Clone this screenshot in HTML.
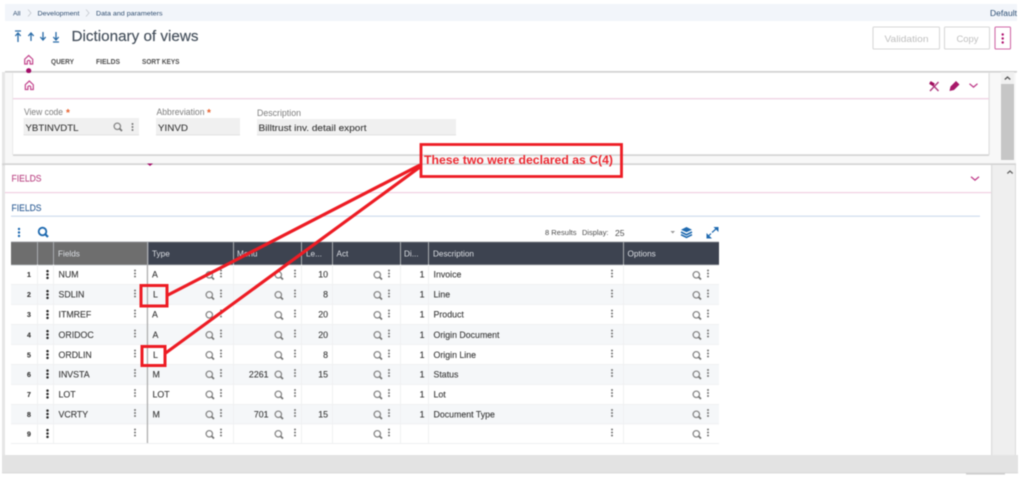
<!DOCTYPE html>
<html lang="en">
<head>
<meta charset="utf-8">
<title>Dictionary of views</title>
<style>
html,body{margin:0;padding:0;background:#fff;width:1024px;height:479px;overflow:hidden}
svg{display:block;filter:blur(.5px)}
text{font-family:"Liberation Sans",sans-serif}
.r text{font-size:8.8px;fill:#3a3a3a;stroke:#3a3a3a;stroke-width:.12px}
.n{font-weight:bold;font-size:7px!important;fill:#333!important}
.e{text-anchor:end}
.h{font-size:8.2px;fill:#dcdfe4}
</style>
</head>
<body>
<svg width="1024" height="479" viewBox="0 0 1024 479" xmlns="http://www.w3.org/2000/svg">
<defs>
<g id="s"><circle cx="-.7" cy="-.7" r="3.2" fill="none" stroke="#888" stroke-width="1.3"/><path d="M1.5 1.5L4 4" stroke="#777" stroke-width="1.8"/></g>
<g id="k"><circle cx="0" cy="-3" r="1" fill="#777"/><circle cx="0" cy="0" r="1" fill="#777"/><circle cx="0" cy="3" r="1" fill="#777"/></g>
<g id="kd"><circle cx="0" cy="-3.4" r="1.25" fill="#2c2c2c"/><circle cx="0" cy="0" r="1.25" fill="#2c2c2c"/><circle cx="0" cy="3.4" r="1.25" fill="#2c2c2c"/></g>
<g id="home" fill="none" stroke="#c4488f" stroke-width="1.2"><path d="M-4 -.8L0 -4.5L4 -.8V4H1.4V1.2Q0 -.4 -1.4 1.2V4H-4Z"/></g>
<g id="cv"><path d="M-4 -1.8L0 1.6L4 -1.8" fill="none" stroke="#c0408c" stroke-width="1.3"/></g>
<g id="ri">
<use href="#k" x="135" y="-1"/>
<use href="#s" x="210" y="1"/><use href="#k" x="221" y="-1"/>
<use href="#s" x="279" y="1"/><use href="#k" x="295" y="-1"/>
<use href="#s" x="378" y="1"/><use href="#k" x="389" y="-1"/>
<use href="#k" x="612" y="-1"/>
<use href="#s" x="697" y="1"/><use href="#k" x="708" y="-1"/>
<use href="#kd" x="47.5" y="0"/>
</g>
<g id="gr" fill="#f0f1f2">
<rect x="37" y="-10" width="1" height="20"/><rect x="53" y="-10" width="1" height="20"/><rect x="233" y="-10" width="1" height="20"/><rect x="301" y="-10" width="1" height="20"/><rect x="332" y="-10" width="1" height="20"/><rect x="400" y="-10" width="1" height="20"/><rect x="428" y="-10" width="1" height="20"/><rect x="623" y="-10" width="1" height="20"/>
</g>
</defs>

<rect width="1024" height="479" fill="#fff"/>
<!-- left strip and body -->
<rect x="2" y="72" width="1014" height="384" fill="#f8f8f8"/>
<rect x="2" y="72" width="3" height="384" fill="#e6e6e6"/>

<!-- breadcrumb -->
<rect x="5" y="4" width="1012" height="17" fill="#f2f5fa"/>
<text x="13" y="15.5" font-size="6.8" fill="#2f4d70">All</text>
<path d="M28 9.5L31 13L28 16.5M86 9.5L89 13L86 16.5" fill="none" stroke="#c8ccd2" stroke-width=".9"/>
<text x="37.5" y="15.5" font-size="6.8" fill="#2f4d70" textLength="42" lengthAdjust="spacingAndGlyphs">Development</text>
<text x="96" y="15.5" font-size="6.8" fill="#2f4d70" textLength="66.5" lengthAdjust="spacingAndGlyphs">Data and parameters</text>
<text x="990" y="16" font-size="8" fill="#2d4f74" textLength="27" lengthAdjust="spacingAndGlyphs">Default</text>

<!-- header -->
<rect x="5" y="21" width="1012" height="50" fill="#fff"/>
<g fill="none" stroke="#2a6ca8" stroke-width="1.3">
<path d="M15 31H21M18 42V33M15.3 36L18 33L20.7 36"/>
<path d="M31 41V33M28.3 36L31 33L33.7 36"/>
<path d="M43 32V40M40.3 37L43 40L45.7 37"/>
<path d="M56 32V40M53.3 37L56 40L58.7 37M53 42H59"/>
</g>
<text x="71.5" y="41" font-size="15" fill="#444f5b" stroke="#444f5b" stroke-width=".15" textLength="127" lengthAdjust="spacingAndGlyphs">Dictionary of views</text>
<rect x="873" y="27" width="66.5" height="22" rx="1" fill="#fff" stroke="#d8d8d8" stroke-width="1.1"/>
<text x="884.5" y="42" font-size="9.5" fill="#c0c0c0" textLength="44" lengthAdjust="spacingAndGlyphs">Validation</text>
<rect x="944.5" y="27" width="45" height="22" rx="1" fill="#fff" stroke="#d8d8d8" stroke-width="1.1"/>
<text x="956.5" y="42" font-size="9.5" fill="#c0c0c0" textLength="22" lengthAdjust="spacingAndGlyphs">Copy</text>
<rect x="995" y="27" width="15.5" height="22" rx="1" fill="#fff" stroke="#d06aa8" stroke-width="1.1"/>
<circle cx="1002.7" cy="34.5" r="1.2" fill="#b0106e"/><circle cx="1002.7" cy="38.5" r="1.2" fill="#b0106e"/><circle cx="1002.7" cy="42.5" r="1.2" fill="#b0106e"/>

<use href="#home" x="28.7" y="60"/>
<text x="51" y="64" font-size="7.4" font-weight="bold" fill="#505050" textLength="23" lengthAdjust="spacingAndGlyphs">QUERY</text>
<text x="96" y="64" font-size="7.4" font-weight="bold" fill="#505050" textLength="24" lengthAdjust="spacingAndGlyphs">FIELDS</text>
<text x="142" y="64" font-size="7.4" font-weight="bold" fill="#505050" textLength="37.5" lengthAdjust="spacingAndGlyphs">SORT KEYS</text>
<rect x="5" y="71" width="1012" height="1.6" fill="#d0d0d0"/>
<circle cx="28.7" cy="70.7" r="2.6" fill="#a30e69"/>

<!-- card 1 -->
<rect x="13" y="73" width="976" height="82" fill="#fff"/>
<rect x="13" y="154.3" width="976" height="1.6" fill="#d2d2d2"/>
<rect x="988.5" y="73" width="1.2" height="82" fill="#dedede"/>
<rect x="12.3" y="73" width=".8" height="82" fill="#e6e6e6"/>
<use href="#home" x="29.3" y="85.5"/>
<rect x="13" y="98" width="976" height="1.4" fill="#f0d5e5"/>
<path d="M930 82L938.5 91M938.5 82L930 91" fill="none" stroke="#b03a80" stroke-width="1.4"/>
<path d="M930 82.5L934 85" stroke="#a0105f" stroke-width="3.2"/>
<path d="M949.5 91L950.5 86.5L956 81L959.5 84.5L954 90Z" fill="#a8186a"/>
<use href="#cv" x="973.5" y="85.5"/>

<text x="24" y="115" font-size="8.8" fill="#7e7e7e" textLength="39" lengthAdjust="spacingAndGlyphs">View code</text>
<text x="66" y="116" font-size="10" font-weight="bold" fill="#e8602c">*</text>
<rect x="23.5" y="118" width="115.5" height="17" fill="#f0f0f0"/>
<rect x="23.5" y="134.5" width="115.5" height=".8" fill="#dcdcdc"/>
<text x="25.5" y="131" font-size="9.4" fill="#3c3c3c" stroke="#3c3c3c" stroke-width=".12" textLength="53" lengthAdjust="spacingAndGlyphs">YBTINVDTL</text>
<use href="#s" x="118" y="127"/><use href="#k" x="132.5" y="127"/>

<text x="156.5" y="115" font-size="8.8" fill="#7e7e7e" textLength="48" lengthAdjust="spacingAndGlyphs">Abbreviation</text>
<text x="207" y="116" font-size="10" font-weight="bold" fill="#e8602c">*</text>
<rect x="156" y="118" width="84" height="17" fill="#f0f0f0"/>
<rect x="156" y="134.5" width="84" height=".8" fill="#dcdcdc"/>
<text x="158" y="131" font-size="9.4" fill="#3c3c3c" stroke="#3c3c3c" stroke-width=".12" textLength="30" lengthAdjust="spacingAndGlyphs">YINVD</text>

<text x="257" y="116" font-size="8.8" fill="#7e7e7e" textLength="44" lengthAdjust="spacingAndGlyphs">Description</text>
<rect x="257" y="119" width="199" height="16" fill="#f0f0f0"/>
<rect x="257" y="134.5" width="199" height=".8" fill="#dcdcdc"/>
<text x="258.5" y="131" font-size="9.4" fill="#3c3c3c" stroke="#3c3c3c" stroke-width=".12" textLength="108" lengthAdjust="spacingAndGlyphs">Billtrust inv. detail export</text>

<!-- scrollbar 1 -->
<rect x="1001" y="72" width="13" height="88" fill="#f0f0f0"/>
<rect x="1001" y="84" width="13" height="76" fill="#c6c6c6"/>
<path d="M1004.8 79.5L1007.5 77L1010.2 79.5" fill="none" stroke="#555" stroke-width="1.3"/>

<!-- section 2 -->
<rect x="2" y="163.3" width="1014" height="2" fill="#d4d4d4"/>
<rect x="5" y="165" width="986" height="290" fill="#fff"/>
<path d="M147 163.5H153L150 166Z" fill="#a30e69"/>
<rect x="991" y="165" width="25" height="290" fill="#efefef"/>
<rect x="991" y="165" width="1.2" height="290" fill="#dcdcdc"/>
<rect x="1015" y="165" width="1" height="290" fill="#dcdcdc"/>
<path d="M1007.3 173.5L1010 171L1012.7 173.5" fill="none" stroke="#666" stroke-width="1.3"/>
<text x="11.5" y="181.5" font-size="9" fill="#bd4b88" stroke="#bd4b88" stroke-width=".15" textLength="30" lengthAdjust="spacingAndGlyphs">FIELDS</text>
<use href="#cv" x="975" y="178.5"/>
<rect x="5" y="192" width="986" height="1.2" fill="#f1d0e2"/>
<text x="11.5" y="211" font-size="9" fill="#36649a" stroke="#36649a" stroke-width=".15" textLength="30" lengthAdjust="spacingAndGlyphs">FIELDS</text>
<rect x="11" y="215.7" width="969" height="1" fill="#c6d5ea"/>

<!-- toolbar -->
<circle cx="19" cy="229" r="1.2" fill="#1f6ab0"/><circle cx="19" cy="232.5" r="1.2" fill="#1f6ab0"/><circle cx="19" cy="236" r="1.2" fill="#1f6ab0"/>
<circle cx="42.5" cy="231.5" r="3.8" fill="none" stroke="#1f6ab0" stroke-width="1.8"/><path d="M45.2 234.2L48 237" stroke="#1f6ab0" stroke-width="2.2"/>
<text x="545" y="235" font-size="7.6" fill="#4c4c4c" textLength="31.5" lengthAdjust="spacingAndGlyphs">8 Results</text>
<text x="582" y="235" font-size="7.6" fill="#4c4c4c" textLength="26.5" lengthAdjust="spacingAndGlyphs">Display:</text>
<text x="615" y="236" font-size="8.6" fill="#4c4c4c">25</text>
<path d="M670.5 231H675L672.7 233.5Z" fill="#999"/>
<path d="M686.5 227L692 229.7L686.5 232.3L681 229.7Z" fill="#1f6ab0"/>
<path d="M681 232L686.5 234.7L692 232M681 234.7L686.5 237.4L692 234.7" fill="none" stroke="#1f6ab0" stroke-width="1.6"/>
<path d="M712 232.5L717 228M707 237.5L711 233.5" stroke="#1f6ab0" stroke-width="1.2"/>
<path d="M713.5 227H718.5V232ZM706.5 233V238.5H712Z" fill="#1f6ab0"/>

<!-- table header -->
<rect x="11" y="242" width="137" height="23" fill="#6e6e6e"/>
<rect x="148" y="242" width="571" height="23" fill="#3d4350"/>
<g fill="#a8abaf">
<rect x="37" y="242" width="1" height="23"/><rect x="53" y="242" width="1" height="23"/><rect x="147" y="242" width="1.4" height="23"/><rect x="233" y="242" width="1" height="23"/><rect x="301" y="242" width="1" height="23"/><rect x="332" y="242" width="1" height="23"/><rect x="400" y="242" width="1" height="23"/><rect x="428" y="242" width="1" height="23"/><rect x="623" y="242" width="1" height="23"/>
<rect x="11" y="241.5" width="708" height=".8"/><rect x="11" y="264.5" width="708" height=".8"/>
</g>
<text class="h" x="58" y="256.5">Fields</text>
<text class="h" x="152" y="256.5">Type</text>
<text class="h" x="237" y="256.5">Menu</text>
<text class="h" x="306" y="256.5">Le...</text>
<text class="h" x="336.5" y="256.5">Act</text>
<text class="h" x="404" y="256.5">Di...</text>
<text class="h" x="433" y="256.5">Description</text>
<text class="h" x="627.5" y="256.5">Options</text>

<!-- rows -->
<rect x="11" y="284.5" width="708" height="20" fill="#f5f7f9"/>
<rect x="11" y="324.5" width="708" height="20" fill="#f5f7f9"/>
<rect x="11" y="364.5" width="708" height="20" fill="#f5f7f9"/>
<rect x="11" y="404" width="708" height="19.5" fill="#f5f7f9"/>
<g fill="#eeeff1">
<rect x="11" y="284" width="708" height=".8"/><rect x="11" y="304" width="708" height=".8"/><rect x="11" y="324" width="708" height=".8"/><rect x="11" y="344" width="708" height=".8"/><rect x="11" y="364" width="708" height=".8"/><rect x="11" y="384" width="708" height=".8"/><rect x="11" y="404" width="708" height=".8"/><rect x="11" y="423.5" width="708" height=".8"/><rect x="11" y="443" width="708" height="1"/>
</g>
<use href="#gr" y="274.5"/><use href="#gr" y="294.5"/><use href="#gr" y="314.5"/><use href="#gr" y="334.5"/><use href="#gr" y="354.5"/><use href="#gr" y="374.5"/><use href="#gr" y="394"/><use href="#gr" y="414"/><use href="#gr" y="433.5"/>
<rect x="146.8" y="265" width="1.3" height="178" fill="#aeaeae"/>

<use href="#ri" y="274.5"/><use href="#ri" y="294.5"/><use href="#ri" y="314.5"/><use href="#ri" y="334.5"/><use href="#ri" y="354.5"/><use href="#ri" y="374"/><use href="#ri" y="394"/><use href="#ri" y="414"/><use href="#ri" y="433.5"/>

<g class="r">
<text class="n" x="27" y="277">1</text><text x="58.5" y="277.5">NUM</text><text x="152" y="277.5">A</text><text class="e" x="328" y="277.5">10</text><text class="e" x="424.5" y="277.5">1</text><text x="433.5" y="277.5">Invoice</text>
<text class="n" x="27" y="297">2</text><text x="58.5" y="297.5">SDLIN</text><text x="153" y="297.5">L</text><text class="e" x="328" y="297.5">8</text><text class="e" x="424.5" y="297.5">1</text><text x="433.5" y="297.5">Line</text>
<text class="n" x="27" y="317">3</text><text x="58.5" y="317.5">ITMREF</text><text x="152" y="317.5">A</text><text class="e" x="328" y="317.5">20</text><text class="e" x="424.5" y="317.5">1</text><text x="433.5" y="317.5">Product</text>
<text class="n" x="27" y="337.5">4</text><text x="58.5" y="338">ORIDOC</text><text x="152.5" y="338">A</text><text class="e" x="328" y="338">20</text><text class="e" x="424.5" y="338">1</text><text x="433.5" y="338">Origin Document</text>
<text class="n" x="27" y="357.5">5</text><text x="58.5" y="358">ORDLIN</text><text x="153" y="358">L</text><text class="e" x="328" y="358">8</text><text class="e" x="424.5" y="358">1</text><text x="433.5" y="358">Origin Line</text>
<text class="n" x="27" y="377">6</text><text x="58.5" y="377.5">INVSTA</text><text x="152.5" y="377.5">M</text><text class="e" x="268.5" y="377.5">2261</text><text class="e" x="328" y="377.5">15</text><text class="e" x="424.5" y="377.5">1</text><text x="433.5" y="377.5">Status</text>
<text class="n" x="27" y="397">7</text><text x="58.5" y="397.5">LOT</text><text x="152.5" y="397.5">LOT</text><text class="e" x="424.5" y="397.5">1</text><text x="433.5" y="397.5">Lot</text>
<text class="n" x="27" y="417">8</text><text x="58.5" y="417.5">VCRTY</text><text x="152.5" y="417.5">M</text><text class="e" x="268.5" y="417.5">701</text><text class="e" x="328" y="417.5">15</text><text class="e" x="424.5" y="417.5">1</text><text x="433.5" y="417.5">Document Type</text>
<text class="n" x="27" y="436.5">9</text>
</g>

<!-- bottom bar -->
<rect x="2" y="455" width="1016" height="18" fill="#e3e3e3"/>
<rect x="2" y="472.5" width="1016" height=".8" fill="#d2d2d2"/>
<rect x="966" y="473" width="39" height="1.6" fill="#cfcfcf"/>

<!-- annotations -->
<g fill="none" stroke="#ed1c24">
<path d="M167 295.5L420 165M165 353.5L420 167" stroke-width="3.2"/>
<rect x="141" y="285.5" width="26" height="20.5" stroke-width="3"/>
<rect x="142" y="346.5" width="23" height="19" stroke-width="3"/>
<rect x="421" y="144.5" width="200.5" height="32" stroke-width="2.8"/>
</g>
<text x="424" y="164" font-size="12" font-weight="bold" fill="#ed2a32" textLength="189" lengthAdjust="spacingAndGlyphs">These two were declared as C(4)</text>
</svg>
</body>
</html>
